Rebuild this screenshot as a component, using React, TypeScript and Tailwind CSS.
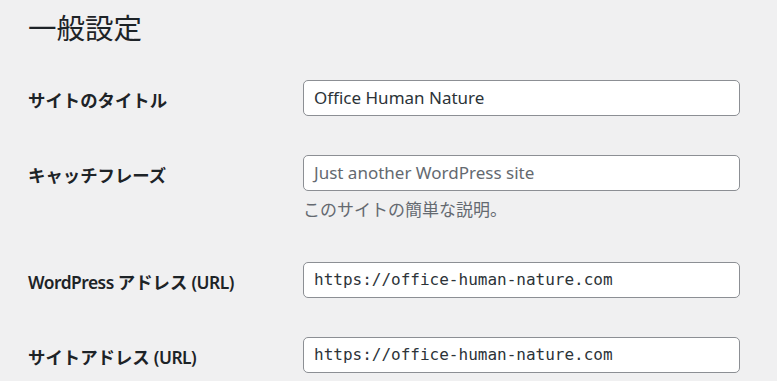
import React from "react";

const sans = "font-['Noto_Sans','Noto_Sans_CJK_JP',sans-serif]";

function Row({ label, children }: { label: React.ReactNode; children: React.ReactNode }) {
  return (
    <div className="flex items-start py-[19.5px]">
      <div className="w-[275px] shrink-0 pt-[9px] text-[17.4px] font-semibold leading-[22px] text-[#1d2327]">{label}</div>
      <div className="flex flex-col">{children}</div>
    </div>
  );
}

function Field({ value, placeholder, mono }: { value?: string; placeholder?: string; mono?: boolean }) {
  return (
    <div
      className={`flex h-[36px] w-[437px] items-center rounded-[5px] border border-[#8c8f94] bg-white px-[10px] text-[#2c3338] ${
        mono ? "font-['DejaVu_Sans_Mono',monospace] text-[16px]" : "text-[17px]"
      }`}
    >
      {value ? <span>{value}</span> : <span className="text-[#646970]">{placeholder}</span>}
    </div>
  );
}

function Lat({ children }: { children: React.ReactNode }) {
  return <span className="tracking-[-0.5px]">{children}</span>;
}

export default function App() {
  return (
    <div className={`${sans} min-h-[381px] w-[777px] bg-[#f0f0f1] px-[28px] pt-[10px]`}>
      <h1 className="text-[28.5px] font-normal leading-[36px] text-[#1d2327]">一般設定</h1>
      <div className="mt-[14.5px]">
        <Row label="サイトのタイトル">
          <Field value="Office Human Nature" />
        </Row>
        <Row label="キャッチフレーズ">
          <Field placeholder="Just another WordPress site" />
          <p className="mt-[5px] text-[17px] leading-[27px] text-[#646970]">このサイトの簡単な説明。</p>
        </Row>
        <Row
          label={
            <>
              <Lat>WordPress </Lat>アドレス<Lat> (URL)</Lat>
            </>
          }
        >
          <Field value="https://office-human-nature.com" mono />
        </Row>
        <Row
          label={
            <>
              サイトアドレス<Lat> (URL)</Lat>
            </>
          }
        >
          <Field value="https://office-human-nature.com" mono />
        </Row>
      </div>
    </div>
  );
}
